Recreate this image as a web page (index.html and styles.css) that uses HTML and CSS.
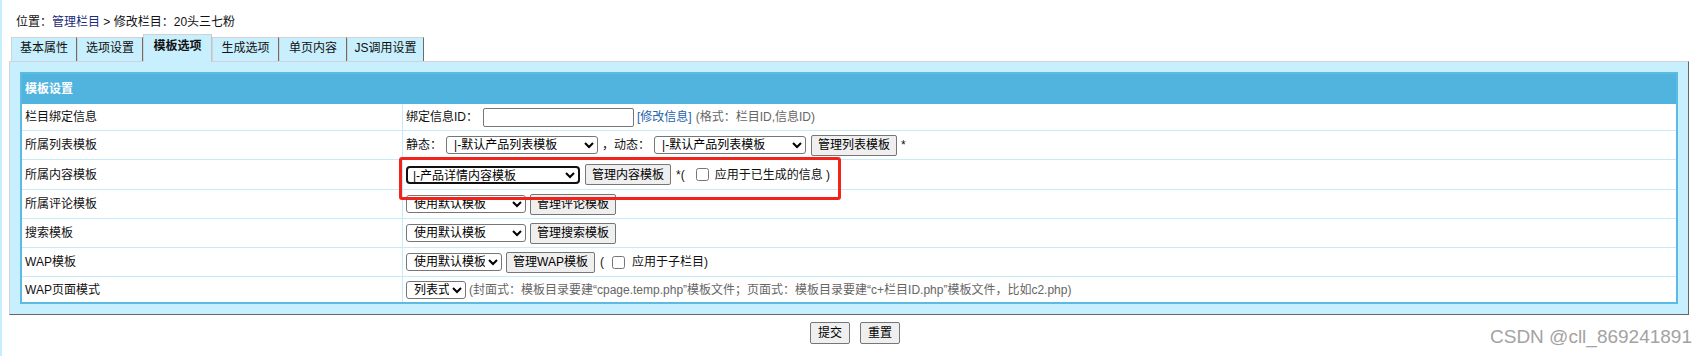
FILE: index.html
```html
<!DOCTYPE html>
<html lang="zh-CN">
<head>
<meta charset="utf-8">
<title>修改栏目</title>
<link rel="stylesheet" href="styles.css">
</head>
<body>
<div class="crumb">位置：<a class="nav">管理栏目</a> &gt; 修改栏目：20头三七粉</div>
<div class="tabs">
  <div class="tab">基本属性</div>
  <div class="tab">选项设置</div>
  <div class="tab active">模板选项</div>
  <div class="tab">生成选项</div>
  <div class="tab">单页内容</div>
  <div class="tab">JS调用设置</div>
</div>
<div class="panel">
  <table class="form">
    <tr><th colspan="2">模板设置</th></tr>
    <tr>
      <td class="label">栏目绑定信息</td>
      <td class="field"><div class="line short">
        <span>绑定信息ID：</span><input class="txt" type="text"><a class="link">[修改信息]</a><span class="hint">(格式：栏目ID,信息ID)</span>
      </div></td>
    </tr>
    <tr>
      <td class="label">所属列表模板</td>
      <td class="field"><div class="line">
        <span>静态：</span><select class="sel w152 ml4"><option>|-默认产品列表模板</option></select><span class="ml4">，动态：</span><select class="sel w152 ml4"><option>|-默认产品列表模板</option></select><button class="btn ml5">管理列表模板</button><span class="ml4">*</span>
      </div></td>
    </tr>
    <tr>
      <td class="label">所属内容模板</td>
      <td class="field"><div class="line tall">
        <select class="sel w174 focus"><option>|-产品详情内容模板</option></select><button class="btn ml5">管理内容模板</button><span class="ml5">*(</span><input class="chk c1" type="checkbox"><span>应用于已生成的信息 )</span>
      </div></td>
    </tr>
    <tr>
      <td class="label">所属评论模板</td>
      <td class="field"><div class="line">
        <select class="sel w120"><option>使用默认模板</option></select><button class="btn ml4">管理评论模板</button>
      </div></td>
    </tr>
    <tr>
      <td class="label">搜索模板</td>
      <td class="field"><div class="line">
        <select class="sel w120"><option>使用默认模板</option></select><button class="btn ml4">管理搜索模板</button>
      </div></td>
    </tr>
    <tr>
      <td class="label">WAP模板</td>
      <td class="field"><div class="line">
        <select class="sel w96"><option>使用默认模板</option></select><button class="btn ml4">管理WAP模板</button><span class="ml5">(</span><input class="chk c2" type="checkbox"><span>应用于子栏目)</span>
      </div></td>
    </tr>
    <tr class="last">
      <td class="label">WAP页面模式</td>
      <td class="field"><div class="line last-line">
        <select class="sel w60"><option>列表式</option></select><span class="hint ml3">(封面式：模板目录要建“cpage.temp.php”模板文件；页面式：模板目录要建“c+栏目ID.php”模板文件，比如c2.php)</span>
      </div></td>
    </tr>
  </table>
</div>
<div class="actions">
  <button class="btn big">提交</button>
  <button class="btn big">重置</button>
</div>
<div class="mark"></div>
<div class="wm">CSDN @cll_869241891</div>
</body>
</html>
```
FILE: styles.css
```css
* { box-sizing: border-box; }
html, body { margin: 0; padding: 0; }
body {
  font: 12px/16px "Liberation Sans", "Noto Sans CJK SC", sans-serif;
  color: #111;
  background: #fff;
  border-left: 2px solid #c6eefc;
  min-height: 356px;
}
.crumb { height: 34px; padding: 14px 0 0 14px; }
.crumb .nav { color: #1b2a7c; text-decoration: none; }

.tabs { display: flex; align-items: flex-end; height: 27px; margin-left: 9px; }
.tab {
  height: 24px;
  padding-top: 2px;
  text-align: center;
  background: #c8effd;
  border-top: 1px solid #d2d2d2;
  border-left: 1px solid #d2d2d2;
  border-right: 1px solid #6b6b6b;
}
.tab:nth-child(1) { width: 66px; }
.tab:nth-child(2) { width: 66px; }
.tab:nth-child(3) { width: 69px; }
.tab:nth-child(4) { width: 67px; }
.tab:nth-child(5) { width: 68px; }
.tab:nth-child(6) { width: 77px; }
.tab.active {
  height: 28px;
  padding-top: 3px;
  margin-bottom: -1px;
  position: relative;
  z-index: 1;
  font-weight: bold;
  border-right-color: #c4c4c4;
}

.panel {
  margin-left: 7px;
  width: 1680px;
  background: #c8effd;
  border: 1px solid;
  border-color: #d6d0da #666 #666 #d6d0da;
  padding: 10px;
}
.form {
  width: 100%;
  border: 2px solid #5bbbe3;
  border-spacing: 0;
  border-collapse: separate;
  background: #fff;
}
.form th {
  height: 30px;
  padding: 0 0 0 3px;
  background: #50b4df;
  color: #fff;
  font-weight: bold;
  text-align: left;
}
.form td {
  padding: 0 3px;
  border-bottom: 1px solid #c5ebf8;
  vertical-align: middle;
}
.form tr.last td { border-bottom: none; }
.form td.label { width: 381px; border-right: 1px solid #c5ebf8; }

.line { display: flex; align-items: center; height: 28px; white-space: nowrap; }
.line.short { height: 26px; }
.line.tall { height: 29px; }
.line.last-line { height: 25px; }

.txt {
  width: 151px; height: 19px; margin-left: 5px;
  border: 1px solid #767676; border-radius: 2px; padding: 0 2px;
  font: inherit; background: #fff;
}
.link { color: #2463ae; margin-left: 3px; text-decoration: none; }
.hint { color: #666; margin-left: 4px; }

.sel {
  height: 18px;
  font: inherit;
  font-size: 12px;
  color: #000;
  background: #fff;
  border: 1px solid #767676;
  border-radius: 3px;
  padding: 0 0 0 3px;
}
.sel.focus { border: 2px solid #101010; border-radius: 4px; padding-left: 1px; }
.w152 { width: 152px; }
.w174 { width: 174px; }
.w120 { width: 120px; }
.w96 { width: 96px; }
.w60 { width: 60px; }

.btn {
  height: 21px;
  padding: 0 6px;
  font: inherit;
  color: #000;
  background: #efefef;
  border: 1px solid #767676;
  border-radius: 2px;
}
.btn.big { height: 22px; padding: 0 7px; }

.chk { width: 13px; height: 13px; margin: 0 6px 0 11px; }
.chk.c2 { margin: 0 7px 0 8px; }

.ml3 { margin-left: 3px; }
.ml4 { margin-left: 4px; }
.ml5 { margin-left: 5px; }

.actions { display: flex; justify-content: center; gap: 10px; margin-top: 7px; }

.mark {
  position: absolute;
  left: 399px; top: 157px;
  width: 442px; height: 43px;
  border: 3px solid #f2231b;
  border-radius: 3px;
}
.wm {
  position: absolute;
  right: 16px; top: 327px;
  font: 19px/19px "Liberation Sans", sans-serif;
  color: #a3a3a3;
}
```
